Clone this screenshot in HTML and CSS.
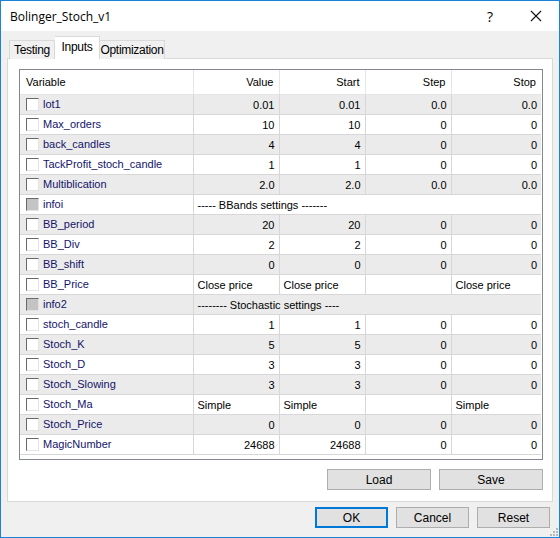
FILE: index.html
```html
<!DOCTYPE html>
<html lang="en">

<head>
    <meta charset="UTF-8">
    <meta name="viewport" content="width=device-width, initial-scale=1.0">
    <title>Bolinger_Stoch_v1</title>
    <link rel="stylesheet" href="styles.css">
</head>

<body>
    <div class="window">
        <!-- Title bar -->
        <div class="titlebar">
            <span class="title">Bolinger_Stoch_v1</span>
            <span class="help">?</span>
            <span class="close">
                <svg width="12" height="12" viewBox="0 0 12 12">
                    <path d="M1 1 L11 11 M11 1 L1 11" stroke="#111" stroke-width="1.1" fill="none" />
                </svg>
            </span>
        </div>

        <div class="content">
            <!-- Tabs -->
            <div class="tabs">
                <div class="tab tab-testing">Testing</div>
                <div class="tab tab-inputs active">Inputs</div>
                <div class="tab tab-optim">Optimization</div>
            </div>

            <!-- Tab panel -->
            <div class="panel">
                <div class="list">
                    <table>
                        <colgroup>
                            <col class="c-var">
                            <col class="c-num">
                            <col class="c-num">
                            <col class="c-num">
                            <col class="c-stop">
                        </colgroup>
                        <thead>
                            <tr>
                                <th class="left">Variable</th>
                                <th>Value</th>
                                <th>Start</th>
                                <th>Step</th>
                                <th>Stop</th>
                            </tr>
                        </thead>
                        <tbody>
                            <tr class="odd">
                                <td class="name"><span class="check"></span>lot1</td>
                                <td>0.01</td><td>0.01</td><td>0.0</td><td>0.0</td>
                            </tr>
                            <tr>
                                <td class="name"><span class="check"></span>Max_orders</td>
                                <td>10</td><td>10</td><td>0</td><td>0</td>
                            </tr>
                            <tr class="odd">
                                <td class="name"><span class="check"></span>back_candles</td>
                                <td>4</td><td>4</td><td>0</td><td>0</td>
                            </tr>
                            <tr>
                                <td class="name"><span class="check"></span>TackProfit_stoch_candle</td>
                                <td>1</td><td>1</td><td>0</td><td>0</td>
                            </tr>
                            <tr class="odd">
                                <td class="name"><span class="check"></span>Multiblication</td>
                                <td>2.0</td><td>2.0</td><td>0.0</td><td>0.0</td>
                            </tr>
                            <tr>
                                <td class="name"><span class="check off"></span>infoi</td>
                                <td class="left" colspan="4">----- BBands settings -------</td>
                            </tr>
                            <tr class="odd">
                                <td class="name"><span class="check"></span>BB_period</td>
                                <td>20</td><td>20</td><td>0</td><td>0</td>
                            </tr>
                            <tr>
                                <td class="name"><span class="check"></span>BB_Div</td>
                                <td>2</td><td>2</td><td>0</td><td>0</td>
                            </tr>
                            <tr class="odd">
                                <td class="name"><span class="check"></span>BB_shift</td>
                                <td>0</td><td>0</td><td>0</td><td>0</td>
                            </tr>
                            <tr>
                                <td class="name"><span class="check"></span>BB_Price</td>
                                <td class="left">Close price</td><td class="left">Close price</td><td></td><td class="left">Close price</td>
                            </tr>
                            <tr class="odd">
                                <td class="name"><span class="check off"></span>info2</td>
                                <td class="left" colspan="4">-------- Stochastic settings ----</td>
                            </tr>
                            <tr>
                                <td class="name"><span class="check"></span>stoch_candle</td>
                                <td>1</td><td>1</td><td>0</td><td>0</td>
                            </tr>
                            <tr class="odd">
                                <td class="name"><span class="check"></span>Stoch_K</td>
                                <td>5</td><td>5</td><td>0</td><td>0</td>
                            </tr>
                            <tr>
                                <td class="name"><span class="check"></span>Stoch_D</td>
                                <td>3</td><td>3</td><td>0</td><td>0</td>
                            </tr>
                            <tr class="odd">
                                <td class="name"><span class="check"></span>Stoch_Slowing</td>
                                <td>3</td><td>3</td><td>0</td><td>0</td>
                            </tr>
                            <tr>
                                <td class="name"><span class="check"></span>Stoch_Ma</td>
                                <td class="left">Simple</td><td class="left">Simple</td><td></td><td class="left">Simple</td>
                            </tr>
                            <tr class="odd">
                                <td class="name"><span class="check"></span>Stoch_Price</td>
                                <td>0</td><td>0</td><td>0</td><td>0</td>
                            </tr>
                            <tr>
                                <td class="name"><span class="check"></span>MagicNumber</td>
                                <td>24688</td><td>24688</td><td>0</td><td>0</td>
                            </tr>
                        </tbody>
                    </table>
                </div>

                <div class="panel-buttons">
                    <button class="btn btn-wide">Load</button>
                    <button class="btn btn-wide">Save</button>
                </div>
            </div>

            <!-- Dialog buttons -->
            <div class="dialog-buttons">
                <button class="btn btn-default">OK</button>
                <button class="btn">Cancel</button>
                <button class="btn">Reset</button>
            </div>

            <!-- Size grip -->
            <svg class="grip" width="10" height="10" viewBox="0 0 10 10">
                <rect x="8" y="2" width="2" height="2" fill="#b8b8b8" />
                <rect x="5" y="5" width="2" height="2" fill="#b8b8b8" />
                <rect x="8" y="5" width="2" height="2" fill="#b8b8b8" />
                <rect x="2" y="8" width="2" height="2" fill="#b8b8b8" />
                <rect x="5" y="8" width="2" height="2" fill="#b8b8b8" />
                <rect x="8" y="8" width="2" height="2" fill="#b8b8b8" />
            </svg>
        </div>
    </div>
</body>

</html>
```

FILE: styles.css
```css
/* Base */
body {
    margin: 0;
    padding: 0;
    font-family: "Liberation Sans", Arial, sans-serif;
    font-size: 11px;
    color: #000;
    background: #f0f0f0;
}

/* Window frame */
.window {
    width: 560px;
    height: 538px;
    box-sizing: border-box;
    border: 1px solid #1883d7;
    background: #f0f0f0;
    display: flex;
    flex-direction: column;
}

.titlebar {
    height: 30px;
    background: #fff;
    display: flex;
    align-items: center;
}

.title {
    flex: 1;
    padding-left: 9px;
    font-family: "Open Sans", "Noto Sans", sans-serif;
    font-size: 12px;
    color: #000;
}

.help {
    width: 46px;
    text-align: center;
    font-family: "Open Sans", sans-serif;
    font-size: 14px;
}

.close {
    width: 46px;
    display: flex;
    justify-content: center;
}

.content {
    position: relative;
    flex: 1;
    padding: 6px 6px 0 6px;
}

/* Tabs */
.tabs {
    display: flex;
    align-items: flex-end;
    height: 22px;
    padding-left: 2px;
    position: relative;
    z-index: 1;
    margin-bottom: -1px;
}

.tab {
    height: 19px;
    line-height: 19px;
    box-sizing: border-box;
    text-align: center;
    border: 1px solid #d9d9d9;
    border-bottom: none;
    background: #f0f0f0;
    font-size: 12px;
    letter-spacing: -0.3px;
}

.tab-testing {
    width: 46px;
}

.tab-inputs {
    width: 45px;
}

.tab-optim {
    width: 65px;
    border-left: none;
}

.tab.active {
    height: 23px;
    line-height: 20px;
    background: #fff;
    border-left: none;
}

.panel {
    background: #fff;
    border: 1px solid #d9d9d9;
    padding: 10px 9px 11px 11px;
}

/* List view */
.list {
    height: 389px;
    border: 1px solid #828790;
    background: #fff;
}

table {
    width: 521px;
    border-collapse: collapse;
    table-layout: fixed;
}

.c-var {
    width: 173px;
}

.c-num {
    width: 86px;
}

.c-stop {
    width: 90px;
}

th {
    height: 24px;
    font-weight: normal;
    text-align: right;
    padding: 0 5px 0 6px;
    border-right: 1px solid #e5e5e5;
    border-bottom: 1px solid #e5e5e5;
    white-space: nowrap;
}

th:last-child {
    border-right: none;
}

th.left {
    text-align: left;
}

td {
    height: 19px;
    padding: 0 4px;
    text-align: right;
    border-right: 1px solid #d7d7d7;
    border-bottom: 1px solid #d7d7d7;
    white-space: nowrap;
    overflow: hidden;
}

td:last-child {
    border-right: none;
}

td.left {
    text-align: left;
}

td.name {
    text-align: left;
    padding-left: 6px;
    color: #14146a;
}

tr.odd td {
    background: #ebebeb;
}

/* Checkbox */
.check {
    display: inline-block;
    vertical-align: -3px;
    width: 13px;
    height: 13px;
    box-sizing: border-box;
    margin-right: 4px;
    background: #fff;
    border-top: 1px solid #696969;
    border-left: 1px solid #696969;
    border-right: 1px solid #e3e3e3;
    border-bottom: 1px solid #e3e3e3;
}

.check.off {
    background: #c4c4c4;
}

/* Buttons */
.panel-buttons {
    display: flex;
    justify-content: flex-end;
    gap: 8px;
    margin-top: 9px;
}

.btn {
    height: 21px;
    width: 73px;
    padding: 0;
    background: #e1e1e1;
    border: 1px solid #adadad;
    font-family: "Liberation Sans", Arial, sans-serif;
    font-size: 12px;
    color: #000;
}

.btn-wide {
    width: 104px;
}

.btn-default {
    border: 2px solid #0078d7;
}

.dialog-buttons {
    display: flex;
    justify-content: flex-end;
    gap: 8px;
    margin-top: 5px;
    padding-right: 3px;
}

.grip {
    position: absolute;
    right: 1px;
    bottom: 1px;
}
```
